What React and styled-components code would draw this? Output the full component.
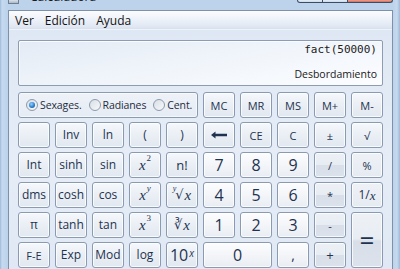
import React from 'react';
import styled, { createGlobalStyle } from 'styled-components';

const Global = createGlobalStyle`
  html, body { margin: 0; padding: 0; width: 400px; height: 269px; overflow: hidden; background: #bcd2ea; }
  #root { width: 400px; height: 269px; }
  * { box-sizing: border-box; }
`;

const Window = styled.div`
  width: 400px;
  height: 269px;
  overflow: hidden;
  display: flex;
  flex-direction: column;
  padding: 0 7px 0 8px;
  background: linear-gradient(to right, #9fb9d8 0, #c6daef 2px, #bcd3eb 7px, #bcd3eb 393px, #c6daef 397px, #9fb9d8 400px);
  font-family: "Open Sans", "Noto Sans", sans-serif;
`;

const TitleBar = styled.div`
  height: 10px;
  display: flex;
  align-items: flex-start;
  overflow: hidden;
  margin-right: -7px;
`;

const AppIcon = styled.div`
  width: 11px;
  height: 4px;
  border: 1px solid #6f7f92;
  border-top: none;
  background: linear-gradient(#d9e2ec, #aeb9c6);
`;

const TitleText = styled.span`
  margin-left: 11px;
  margin-top: -10px;
  font-size: 12px;
  line-height: 14px;
  color: #1a1a1a;
  flex: 1;
`;

const Captions = styled.div`
  display: flex;
  margin-right: 7px;
`;

const Caption = styled.div`
  width: ${p => p.$w}px;
  height: 3px;
  border: 1px solid #3b4d66;
  border-top: none;
  border-left-width: ${p => (p.$first ? 1 : 0)}px;
  border-radius: ${p => p.$r};
  background: ${p => (p.$close ? 'linear-gradient(#e8a496, #d46a57)' : 'linear-gradient(#e6eef7, #c9d8ea)')};
`;

const Client = styled.div`
  flex: 1;
  display: flex;
  flex-direction: column;
  border: 1px solid #7f91a9;
  border-bottom: none;
  background: linear-gradient(#dde7f3, #e6edf7 60%, #dfe8f4);
`;

const MenuBar = styled.div`
  height: 19px;
  display: flex;
  align-items: center;
  padding-left: 1px;
  background: linear-gradient(#fbfcfe, #eef2f9 45%, #e1e8f3 85%, #d7e0ed);
  border-bottom: 1px solid #eef3fa;
`;

const MenuItem = styled.span`
  font-size: 12px;
  color: #141414;
  padding: 0 5px;
  margin-right: ${p => p.$mr || 0}px;
  line-height: 19px;
`;

const Body = styled.div`
  padding: 10px 9px 0 9px;
  display: flex;
  flex-direction: column;
  gap: 6px;
`;

const Display = styled.div`
  height: 46px;
  width: 365px;
  border: 1px solid #8e9cb1;
  border-radius: 2px;
  background: linear-gradient(170deg, #e4ebf5 0%, #eff4fa 45%, #fcfdff 100%);
  box-shadow: inset 1px 1px 0 #f8fbff;
  display: flex;
  flex-direction: column;
  align-items: flex-end;
  justify-content: space-between;
  padding: 2px 5px 3px 0;
`;

const Expr = styled.div`
  font-family: "DejaVu Sans Mono", "Liberation Mono", monospace;
  font-size: 11px;
  color: #202020;
  line-height: 14px;
`;

const Result = styled.div`
  font-size: 10.5px;
  color: #202020;
  line-height: 15px;
`;

const Pad = styled.div`
  display: grid;
  grid-template-columns: repeat(10, 32px);
  grid-template-rows: repeat(6, 26px);
  column-gap: 5px;
  row-gap: 4px;
`;

const backgrounds = {
  fn: 'linear-gradient(#f5f8fb, #eaeff5 50%, #e2e8f0)',
  num: 'linear-gradient(#fdfdfe, #f3f5f8 50%, #e9edf3)',
  op: 'linear-gradient(#edf1f6, #e8edf3 48%, #d8dfe8 52%, #dbe2eb)',
  pale: 'linear-gradient(#eef2f7, #e6ebf2)',
};

const Key = styled.div`
  grid-column: span ${p => p.$cols || 1};
  grid-row: span ${p => p.$rows || 1};
  display: flex;
  align-items: center;
  justify-content: center;
  border: 1px solid #8a9ab0;
  border-radius: 3px;
  background: ${p => backgrounds[p.$v || 'fn']};
  box-shadow: inset 0 0 0 1px rgba(255, 255, 255, 0.75);
  color: #1f3350;
  font-size: ${p => p.$fs || 11}px;
  line-height: 1;
  white-space: nowrap;
`;

const Math = styled.span`
  font-family: "Liberation Serif", "DejaVu Serif", serif;
  font-style: italic;
  font-size: 15px;
  color: #1f3350;
  display: inline-flex;
  align-items: flex-start;
`;

const Sup = styled.span`
  font-size: 9px;
  margin-top: -4px;
  margin-left: 1px;
  font-style: ${p => (p.$upright ? 'normal' : 'italic')};
`;

const PreSup = styled.span`
  font-size: 8px;
  margin-top: -3px;
  margin-right: -1px;
`;

const Root = styled.span`
  font-style: normal;
  font-family: "DejaVu Sans", sans-serif;
  font-size: 13px;
  margin-right: 1px;
`;

const RadioGroup = styled.div`
  grid-column: span 5;
  display: flex;
  align-items: center;
  gap: 7px;
  padding-left: 7px;
  border: 1px solid #8a9ab0;
  border-radius: 3px;
  background: linear-gradient(#eef2f8, #e6ecf4);
  box-shadow: inset 0 0 0 1px rgba(255, 255, 255, 0.6);
`;

const RadioLabel = styled.label`
  display: flex;
  align-items: center;
  gap: 2px;
  font-size: 10.5px;
  letter-spacing: -0.1px;
  color: #1f2c3d;
`;

const RadioDot = styled.span`
  width: 12px;
  height: 12px;
  border-radius: 50%;
  border: 1px solid #8d9aab;
  background: linear-gradient(135deg, #d9dfe6, #f7f9fb);
  display: flex;
  align-items: center;
  justify-content: center;
  &::after {
    content: '';
    width: 6px;
    height: 6px;
    border-radius: 50%;
    display: ${p => (p.$on ? 'block' : 'none')};
    background: radial-gradient(circle at 40% 35%, #8fd3ff, #2a78c8 60%, #184f8e);
  }
`;

const Radio = ({ on, children }) => (
  <RadioLabel>
    <RadioDot $on={on} />
    {children}
  </RadioLabel>
);

const BackArrow = () => (
  <svg width="18" height="8" viewBox="0 0 18 8">
    <path d="M1 4 L5.5 0.5 L5.5 2.8 L17 2.8 L17 5.2 L5.5 5.2 L5.5 7.5 Z" fill="#1f3350" />
  </svg>
);

export default function App() {
  return (
    <>
      <Global />
      <Window>
        <TitleBar>
          <AppIcon />
          <TitleText>Calculadora</TitleText>
          <Captions>
            <Caption $w={26} $first $r="0 0 0 4px" />
            <Caption $w={25} $r="0" />
            <Caption $w={45} $close $r="0 0 4px 0" />
          </Captions>
        </TitleBar>
        <Client>
          <MenuBar>
            <MenuItem $mr={1}>Ver</MenuItem>
            <MenuItem $mr={1}>Edición</MenuItem>
            <MenuItem>Ayuda</MenuItem>
          </MenuBar>
          <Body>
            <Display>
              <Expr>fact(50000)</Expr>
              <Result>Desbordamiento</Result>
            </Display>
            <Pad>
              <RadioGroup>
                <Radio on>Sexages.</Radio>
                <Radio>Radianes</Radio>
                <Radio>Cent.</Radio>
              </RadioGroup>
              <Key>MC</Key>
              <Key>MR</Key>
              <Key>MS</Key>
              <Key>M+</Key>
              <Key>M-</Key>

              <Key />
              <Key $fs={12}>Inv</Key>
              <Key $fs={12}>ln</Key>
              <Key $fs={12}>(</Key>
              <Key $fs={12}>)</Key>
              <Key><BackArrow /></Key>
              <Key>CE</Key>
              <Key>C</Key>
              <Key>±</Key>
              <Key>√</Key>

              <Key $fs={12}>Int</Key>
              <Key $fs={12}>sinh</Key>
              <Key $fs={12}>sin</Key>
              <Key><Math>x<Sup $upright>2</Sup></Math></Key>
              <Key $fs={13}>n!</Key>
              <Key $v="num" $fs={16}>7</Key>
              <Key $v="num" $fs={16}>8</Key>
              <Key $v="num" $fs={16}>9</Key>
              <Key $v="op">/</Key>
              <Key $v="pale">%</Key>

              <Key $fs={12}>dms</Key>
              <Key $fs={12}>cosh</Key>
              <Key $fs={12}>cos</Key>
              <Key><Math>x<Sup>y</Sup></Math></Key>
              <Key><Math><PreSup>y</PreSup><Root>√</Root>x</Math></Key>
              <Key $v="num" $fs={16}>4</Key>
              <Key $v="num" $fs={16}>5</Key>
              <Key $v="num" $fs={16}>6</Key>
              <Key $v="op">*</Key>
              <Key $v="pale" $fs={12}>1/<Math style={{ fontSize: 13 }}>x</Math></Key>

              <Key $fs={12}>π</Key>
              <Key $fs={12}>tanh</Key>
              <Key $fs={12}>tan</Key>
              <Key><Math>x<Sup $upright>3</Sup></Math></Key>
              <Key><Math><Root>∛</Root>x</Math></Key>
              <Key $v="num" $fs={16}>1</Key>
              <Key $v="num" $fs={16}>2</Key>
              <Key $v="num" $fs={16}>3</Key>
              <Key $v="op">-</Key>
              <Key $v="op" $rows={2} $fs={26}>=</Key>

              <Key $fs={11}>F-E</Key>
              <Key $fs={12}>Exp</Key>
              <Key $fs={12}>Mod</Key>
              <Key $fs={12}>log</Key>
              <Key $fs={16}>10<Sup style={{ fontSize: 10 }}>x</Sup></Key>
              <Key $v="num" $fs={16} $cols={2}>0</Key>
              <Key $v="num" $fs={14}>,</Key>
              <Key $v="op" $fs={13}>+</Key>
            </Pad>
          </Body>
        </Client>
      </Window>
    </>
  );
}
